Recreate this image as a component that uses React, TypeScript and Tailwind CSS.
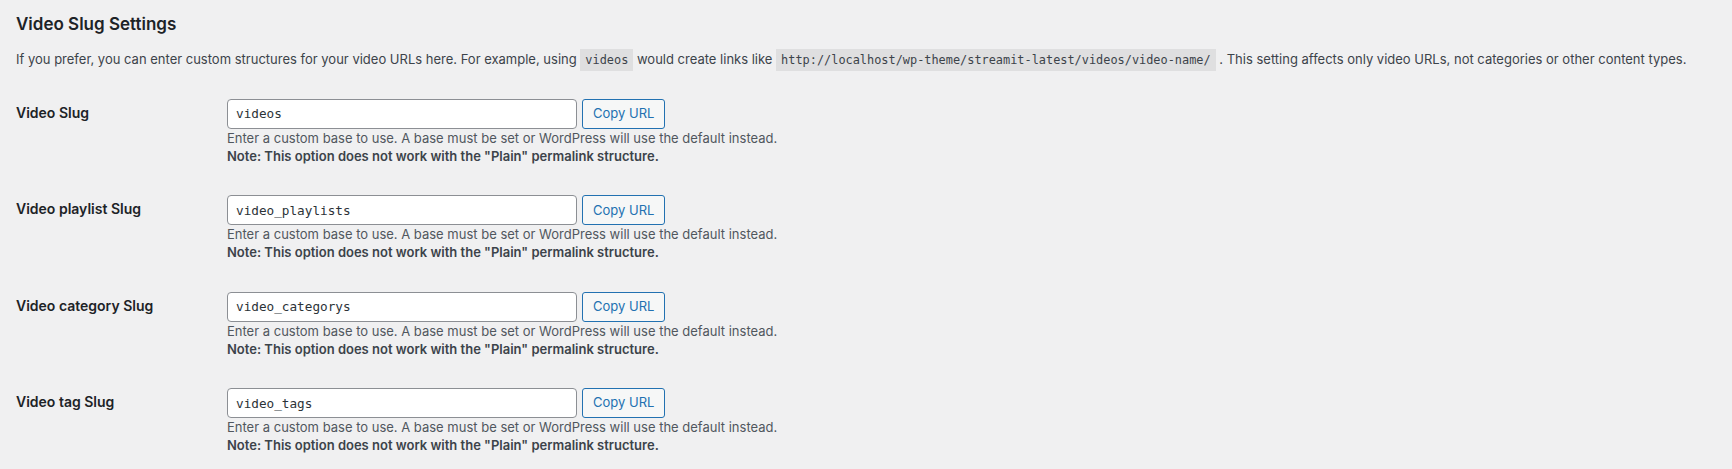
import React from "react";

const sans = { fontFamily: "Inter, Roboto, 'Liberation Sans', sans-serif" };
const mono = { fontFamily: "'DejaVu Sans Mono', 'Liberation Mono', monospace" };

function Row({ label, value }: { label: string; value: string }) {
  return (
    <div className="flex">
      <div className="w-[211px] shrink-0 pt-[20px] text-[14px] leading-[18px] font-semibold text-[#1d2327]">
        {label}
      </div>
      <div className="flex flex-col pt-[15px] pb-[15.4px]">
        <div className="flex items-center">
          <div
            className="w-[350px] h-[30px] rounded-[4px] border border-[#8c8f94] bg-white px-[8px] flex items-center text-[12.7px] text-[#2c3338]"
            style={mono}
          >
            {value}
          </div>
          <button className="ml-[5px] h-[30px] rounded-[3px] border border-[#2271b1] bg-[#f6f7f7] px-[10px] text-[13px] text-[#2271b1]">
            Copy URL
          </button>
        </div>
        <div className="mt-0 text-[13px] leading-[18px] text-[#50575e]">
          Enter a custom base to use. A base must be set or WordPress will use the default instead.
          <br />
          <strong className="font-semibold text-[#3c434a]">
            Note: This option does not work with the "Plain" permalink structure.
          </strong>
        </div>
      </div>
    </div>
  );
}

export default function App() {
  const code = "bg-[rgba(0,0,0,0.07)] px-[5px] pt-[4px] pb-[4px] text-[11.9px] text-[#3c434a]";
  return (
    <div className="min-h-[469px] w-full bg-[#f0f0f1] pl-[16px] pt-[11px]" style={sans}>
      <h2 className="text-[17px] leading-[26px] font-semibold text-[#1d2327]">Video Slug Settings</h2>
      <p className="mt-[11px] text-[13px] leading-[23px] text-[#3c434a]">
        If you prefer, you can enter custom structures for your video URLs here. For example, using{" "}
        <code className={code} style={mono}>videos</code> would create links like{" "}
        <code className={code} style={mono}>http://localhost/wp-theme/streamit-latest/videos/video-name/</code> . This
        setting affects only video URLs, not categories or other content types.
      </p>
      <div className="mt-[12px]">
        <Row label="Video Slug" value="videos" />
        <Row label="Video playlist Slug" value="video_playlists" />
        <Row label="Video category Slug" value="video_categorys" />
        <Row label="Video tag Slug" value="video_tags" />
      </div>
    </div>
  );
}
